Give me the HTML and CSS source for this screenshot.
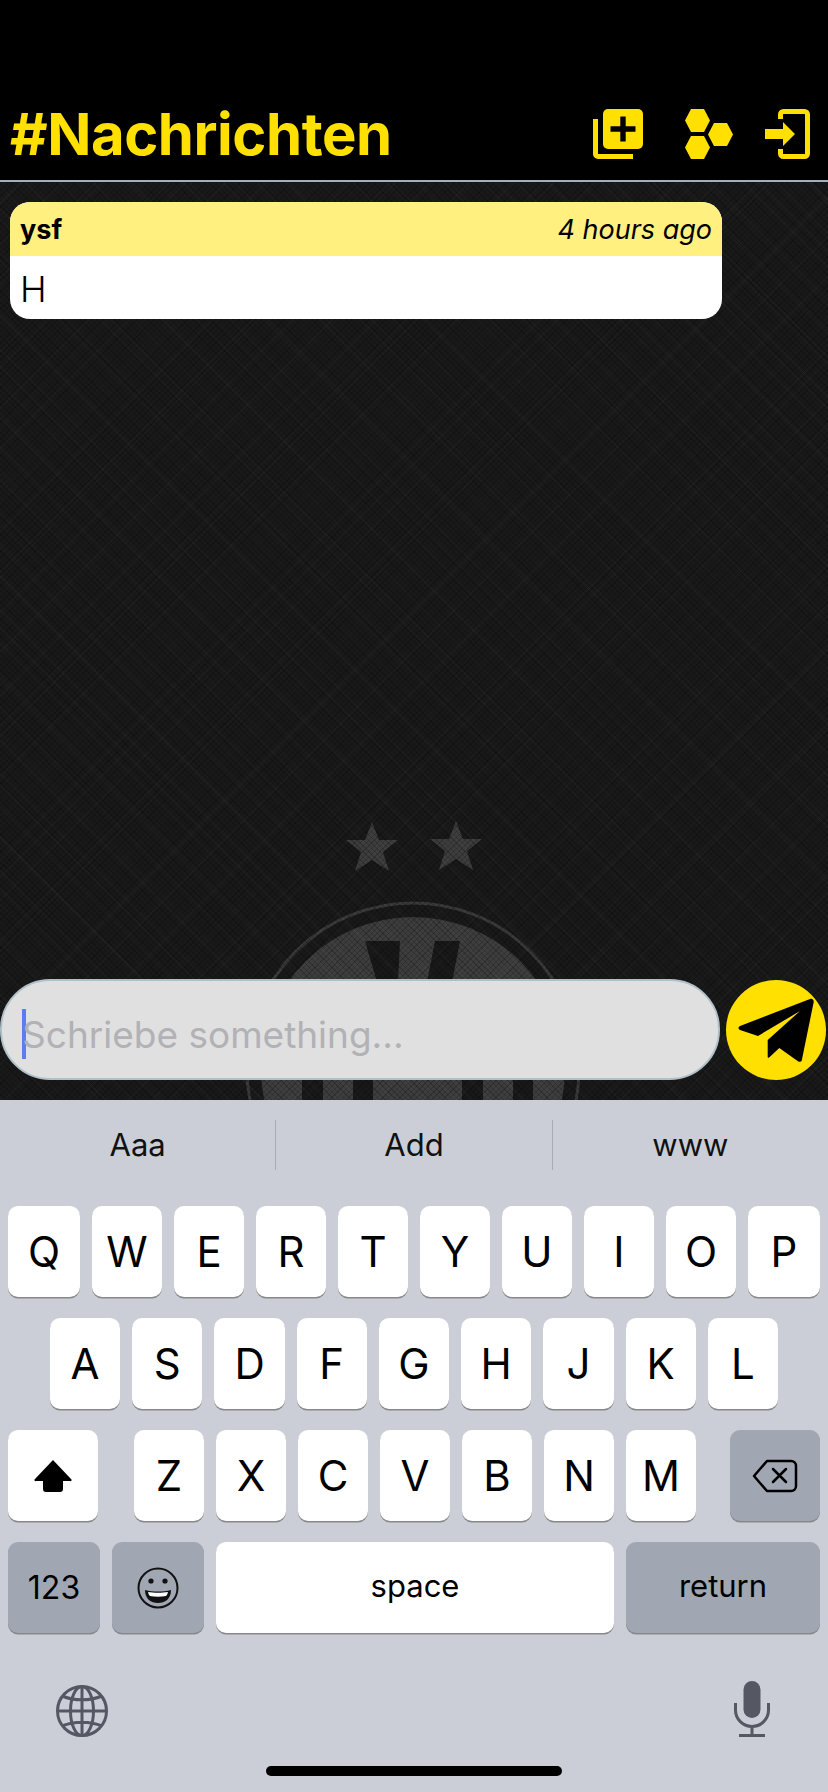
FILE: index.html
```html
<!DOCTYPE html>
<html lang="en">
<head>
    <meta charset="UTF-8">
    <meta name="viewport" content="width=device-width, initial-scale=1.0">
    <title>#Nachrichten</title>
    <link rel="stylesheet" href="styles.css">
</head>
<body>
    <header class="topbar">
        <h1 class="channel">#Nachrichten</h1>
        <nav class="actions">
            <svg class="icon-add" viewBox="0 0 50 50">
                <rect x="10" y="0" width="40" height="40" rx="5" fill="#ffe000"/>
                <path d="M27.300 7.500h5.400v9.800h9.800v5.400h-9.800v9.800h-5.400v-9.800h-9.800v-5.400h9.800z" fill="#000"/>
                <path d="M0 10h5v35h35v5H5a5 5 0 0 1-5-5z" fill="#ffe000"/>
            </svg>
            <svg class="icon-hex" viewBox="0 0 48 50">
                <path d="M6 0h13l6 11.500-6 11.500H6L0 11.500z M6 27h13l6 11.500-6 11.500H6L0 38.500z M29 14h13l6 11.500-6 11.500H29l-6-11.500z" fill="#ffe000"/>
            </svg>
            <svg class="icon-login" viewBox="0 0 45 50">
                <path d="M15.500 10V5.500a3 3 0 0 1 3-3h21a3 3 0 0 1 3 3v39a3 3 0 0 1-3 3h-21a3 3 0 0 1-3-3V40" fill="none" stroke="#ffe000" stroke-width="5"/>
                <path d="M0 20h18v-7l12 12-12 12v-7H0z" fill="#ffe000"/>
            </svg>
        </nav>
    </header>

    <main class="chat">
        <svg class="crest" viewBox="0 0 360 290">
            <polygon points="117,0 124,18 143,18 128,30 134,49 117,38 100,49 106,30 91,18 110,18" fill="#3d3d3d"/>
            <polygon points="201,-1 208,17 227,17 212,29 218,48 201,37 184,48 190,29 175,17 194,17" fill="#3d3d3d"/>
            <circle cx="158" cy="247" r="166" fill="none" stroke="#3a3a3a" stroke-width="3"/>
            <circle cx="158" cy="247" r="152" fill="#3d3d3d"/>
            <polygon points="110,119 145,119 143,160 122,160" fill="#181818"/>
            <polygon points="180,119 205,119 197,160 172,160" fill="#181818"/>
            <rect x="47" y="256" width="21" height="24" fill="#181818"/>
            <rect x="98" y="256" width="20" height="24" fill="#181818"/>
            <rect x="207" y="256" width="21" height="24" fill="#181818"/>
            <rect x="258" y="256" width="20" height="24" fill="#181818"/>
        </svg>
        <div class="weave"></div>

        <section class="messages">
            <article class="bubble">
                <div class="bubble-head">
                    <span class="author">ysf</span>
                    <span class="time">4 hours ago</span>
                </div>
                <div class="bubble-body">H</div>
            </article>
        </section>

        <form class="composer">
            <div class="field">
                <span class="caret"></span>
                <span class="placeholder">Schriebe something...</span>
            </div>
            <div class="send">
                <svg viewBox="0 0 100 100" width="100" height="100">
                    <path d="M84 19 14 46c-2 1-2 3 0 4l18 6 42-25-32.300 29v17c0 1 1 1 2 0l9.600-9 19 13.400c1 .8 3 .3 3.400-.7L87.700 22c.3-2-1.700-4-3.700-3z" fill="#000"/>
                </svg>
            </div>
        </form>
    </main>

    <section class="keyboard">
        <div class="suggestions">
            <span class="suggestion">Aaa</span>
            <span class="suggestion">Add</span>
            <span class="suggestion">www</span>
        </div>
        <div class="keys">
            <div class="row row-top">
                <span class="key">Q</span><span class="key">W</span><span class="key">E</span><span class="key">R</span><span class="key">T</span><span class="key">Y</span><span class="key">U</span><span class="key">I</span><span class="key">O</span><span class="key">P</span>
            </div>
            <div class="row row-home">
                <span class="key">A</span><span class="key">S</span><span class="key">D</span><span class="key">F</span><span class="key">G</span><span class="key">H</span><span class="key">J</span><span class="key">K</span><span class="key">L</span>
            </div>
            <div class="row">
                <span class="key key-side">
                    <svg viewBox="0 0 38 33" width="38" height="33"><path d="M19 1 37 20a1 1 0 0 1-1 2h-7v8a3 3 0 0 1-3 3H12a3 3 0 0 1-3-3v-8H2a1 1 0 0 1-1-2z" fill="#000"/></svg>
                </span>
                <div class="letters">
                    <span class="key">Z</span><span class="key">X</span><span class="key">C</span><span class="key">V</span><span class="key">B</span><span class="key">N</span><span class="key">M</span>
                </div>
                <span class="key key-side key-dark">
                    <svg viewBox="0 0 46 34" width="46" height="34">
                        <path d="M15 2h24a5 5 0 0 1 5 5v20a5 5 0 0 1-5 5H15L2 17z" fill="none" stroke="#000" stroke-width="2.500" stroke-linejoin="round"/>
                        <path d="M21 10l13 13M34 10 21 23" stroke="#000" stroke-width="2.500" stroke-linecap="round"/>
                    </svg>
                </span>
            </div>
            <div class="row">
                <span class="key key-dark key-num">123</span>
                <span class="key key-dark key-emoji">
                    <svg viewBox="0 0 42 42" width="42" height="42">
                        <circle cx="21" cy="21" r="19.500" fill="none" stroke="#111" stroke-width="2"/>
                        <circle cx="14" cy="14" r="2.600" fill="#111"/>
                        <circle cx="28" cy="14" r="2.600" fill="#111"/>
                        <path d="M8 23c8 2 18 2 26 0 0 9-6 13-13 13S8 32 8 23z" fill="#111"/>
                        <path d="M11 25c6 1 14 1 20 0-.5 2-1 3-2 4-5 1-11 1-16 0-1-1-1.500-2-2-4z" fill="#fff"/>
                    </svg>
                </span>
                <span class="key key-space">space</span>
                <span class="key key-dark key-return">return</span>
            </div>
        </div>
        <div class="system-row">
            <svg viewBox="0 0 52 52" width="52" height="52" fill="none" stroke="#555862" stroke-width="3">
                <circle cx="26" cy="26" r="24.500"/>
                <ellipse cx="26" cy="26" rx="11.500" ry="24.500"/>
                <path d="M26 1.500v49M1.500 26h49M6 11c12 5 28 5 40 0M6 41c12-5 28-5 40 0"/>
            </svg>
            <svg viewBox="0 0 36 56" width="36" height="56">
                <rect x="9.500" y="0" width="17" height="37" rx="8.500" fill="#555862"/>
                <path d="M1.500 22v7a16.500 16.500 0 0 0 33 0v-7M18 46v9M5 54.500h26" fill="none" stroke="#555862" stroke-width="3"/>
            </svg>
        </div>
        <div class="home-bar"></div>
    </section>
</body>
</html>
```

FILE: styles.css
```css
* {
    box-sizing: border-box;
}
body {
    font-family: 'Inter', 'Liberation Sans', sans-serif;
    margin: 0;
    padding: 0;
    width: 828px;
    height: 1792px;
    display: flex;
    flex-direction: column;
    overflow: hidden;
    background: #000;
}

/* header */
.topbar {
    height: 182px;
    flex: none;
    background: #000;
    border-bottom: 2px solid #9fb2bb;
    padding: 99px 18px 0 10px;
    display: flex;
    justify-content: space-between;
    align-items: flex-start;
}
.channel {
    margin: 0;
    color: #ffe000;
    font-size: 58px;
    font-weight: 700;
    line-height: 70px;
    letter-spacing: -0.45px;
}
.actions {
    display: flex;
    align-items: center;
    margin-top: 10px;
}
.icon-add {
    width: 50px;
    height: 50px;
}
.icon-hex {
    width: 48px;
    height: 50px;
    margin-left: 42px;
}
.icon-login {
    width: 45px;
    height: 50px;
    margin-left: 32px;
}

/* chat area */
.chat {
    position: relative;
    flex: 1;
    display: flex;
    flex-direction: column;
    justify-content: space-between;
    background: #191919;
    overflow: hidden;
}
.crest {
    position: absolute;
    left: 255px;
    top: 640px;
    width: 360px;
    height: 290px;
    overflow: visible;
}
.weave {
    position: absolute;
    inset: 0;
    background:
        repeating-linear-gradient(45deg, rgba(255, 255, 255, 0.014) 0 2px, transparent 2px 37px),
        repeating-linear-gradient(-45deg, rgba(255, 255, 255, 0.012) 0 2px, transparent 2px 53px),
        repeating-linear-gradient(45deg, rgba(0, 0, 0, 0.18) 0 1px, transparent 1px 4px),
        repeating-linear-gradient(-45deg, rgba(0, 0, 0, 0.18) 0 1px, transparent 1px 4px),
        repeating-linear-gradient(45deg, rgba(255, 255, 255, 0.012) 0 3px, transparent 3px 23px),
        repeating-linear-gradient(-45deg, rgba(255, 255, 255, 0.012) 0 3px, transparent 3px 29px);
}
.messages {
    position: relative;
    padding: 20px 0 0 10px;
}
.bubble {
    width: 712px;
    height: 117px;
    border-radius: 20px;
    overflow: hidden;
    background: #fff;
}
.bubble-head {
    height: 54px;
    background: #fff080;
    padding: 0 10px;
    display: flex;
    justify-content: space-between;
    align-items: center;
    font-size: 27px;
    color: #000;
}
.author {
    font-weight: 700;
}
.time {
    font-style: italic;
}
.bubble-body {
    padding: 13px 10px;
    font-size: 36px;
    line-height: 40px;
    font-weight: 300;
    color: #000;
}

/* message input */
.composer {
    position: relative;
    display: flex;
    align-items: center;
    gap: 6px;
    margin-bottom: 20px;
}
.field {
    width: 720px;
    height: 101px;
    background: #e0e0e0;
    border: 2px solid #b0c0c8;
    border-radius: 50px;
    padding: 9px 0 0 20px;
    display: flex;
    align-items: center;
}
.caret {
    width: 4px;
    height: 50px;
    margin-right: -4px;
    background: #5b7cf5;
    flex: none;
}
.placeholder {
    color: #b1b1b6;
    font-size: 37px;
}
.send {
    width: 100px;
    height: 100px;
    border-radius: 50%;
    background: #ffe000;
    flex: none;
}

/* keyboard */
.keyboard {
    position: relative;
    flex: none;
    height: 692px;
    background: #cbced6;
}
.suggestions {
    height: 106px;
    display: flex;
    padding-top: 20px;
}
.suggestion {
    flex: 1;
    height: 50px;
    padding-bottom: 2px;
    display: flex;
    align-items: center;
    justify-content: center;
    font-size: 31px;
    color: #111;
    border-right: 1px solid #a9acb4;
}
.suggestion:last-child {
    border-right: none;
}
.keys {
    display: flex;
    flex-direction: column;
    gap: 21px;
    padding: 0 8px;
}
.row {
    display: flex;
    justify-content: space-between;
    height: 91px;
    gap: 12px;
}
.row-top .key {
    flex: 0 0 70px;
}
.row-top .key:first-child,
.row-top .key:last-child {
    flex: 0 0 72px;
}
.row-home {
    padding: 0 42px;
}
.letters {
    display: flex;
    flex: 1;
    gap: 12px;
    padding: 0 22px 0 24px;
}
.key {
    flex: 1;
    display: flex;
    align-items: center;
    justify-content: center;
    background: #fff;
    border-radius: 10px;
    box-shadow: 0 1.500px 0 #87888c;
    font-size: 42px;
    color: #000;
}
.key-side {
    flex: 0 0 90px;
}
.key-dark {
    background: #a0a6b2;
}
.key-num {
    flex: 0 0 92px;
    font-size: 32px;
}
.key-emoji {
    flex: 0 0 92px;
}
.key-space {
    flex: 0 0 398px;
    padding-bottom: 5px;
    font-size: 31px;
}
.key-return {
    flex: 0 0 194px;
    padding-bottom: 5px;
    font-size: 31px;
}
.system-row {
    display: flex;
    justify-content: space-between;
    align-items: flex-end;
    padding: 48px 58px 0 56px;
}
.home-bar {
    position: absolute;
    left: 266px;
    bottom: 16px;
    width: 296px;
    height: 10px;
    border-radius: 5px;
    background: #000;
}
```
